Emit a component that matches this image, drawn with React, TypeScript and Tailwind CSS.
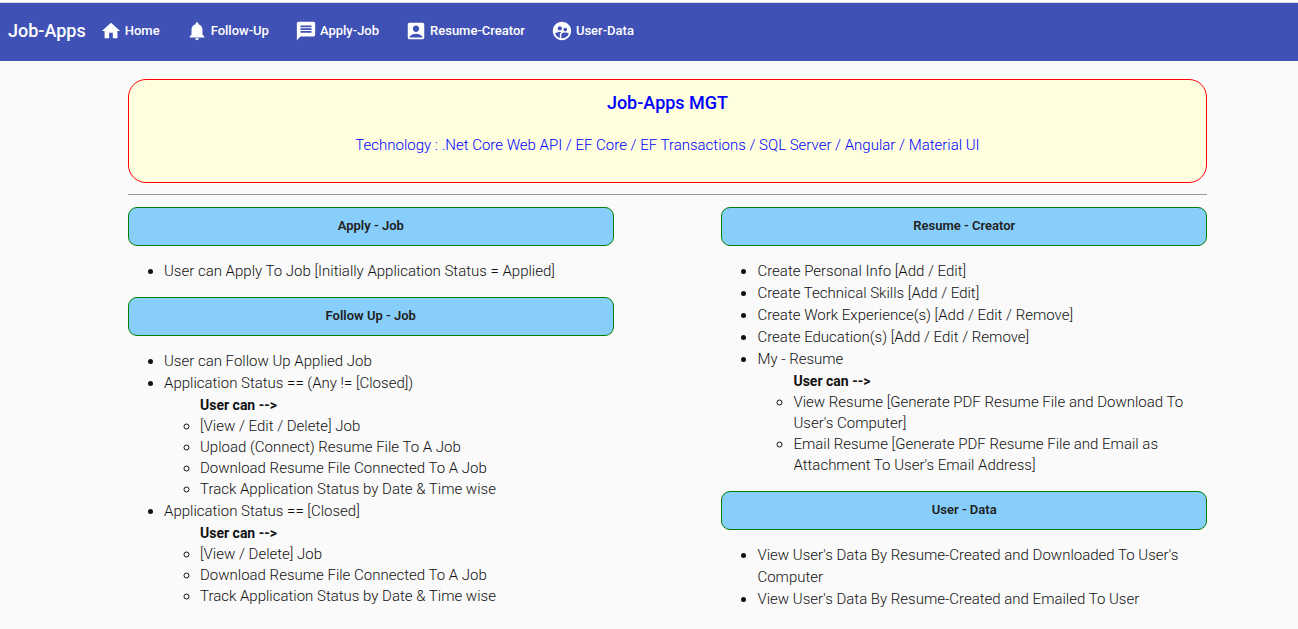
import type { ReactNode } from "react";
import type { IconType } from "react-icons";
import {
  MdAccountBox,
  MdHome,
  MdMessage,
  MdNotifications,
  MdSupervisedUserCircle,
} from "react-icons/md";

const links: { label: string; icon: IconType }[] = [
  { label: "Home", icon: MdHome },
  { label: "Follow-Up", icon: MdNotifications },
  { label: "Apply-Job", icon: MdMessage },
  { label: "Resume-Creator", icon: MdAccountBox },
  { label: "User-Data", icon: MdSupervisedUserCircle },
];

function Section({ title, children }: { title: string; children: ReactNode }) {
  return (
    <section>
      <h2 className="rounded-[9px] border border-[green] bg-[#87cefa] pt-[7px] pb-[9px] text-center text-[13px] leading-[21px] font-semibold">
        {title}
      </h2>
      <ul className="mt-[14px] list-disc pl-9 text-[15px] leading-[22px] font-light text-[#111111]">
        {children}
      </ul>
    </section>
  );
}

function Actions({ items }: { items: string[] }) {
  return (
    <div className="pl-9">
      <b className="block text-sm leading-[22px] font-bold">User can --&gt;</b>
      <ul className="list-[circle] leading-[21px]">
        {items.map((item) => (
          <li key={item}>{item}</li>
        ))}
      </ul>
    </div>
  );
}

export default function App() {
  return (
    <div className="min-h-screen bg-[#fafafa] font-[Roboto,sans-serif] text-[#212121]">
      <div className="h-[3px] border-b border-[#dadce0] bg-white" />
      <header className="flex h-[58px] items-center bg-[#3f51b5] pb-0.5 pl-2 text-white">
        <a href="#" className="text-lg leading-6 font-medium">
          Job-Apps
        </a>
        <nav className="ml-[14px] flex items-center gap-[26px]">
          {links.map(({ label, icon: Icon }) => (
            <a
              key={label}
              href="#"
              className="flex items-center gap-[3px] text-[13px] leading-5 font-medium"
            >
              <Icon size={22} aria-hidden="true" />
              {label}
            </a>
          ))}
        </nav>
      </header>

      <main className="pt-[18px] pr-[91px] pb-5 pl-32">
        <div className="rounded-[18px] border border-[red] bg-[lightyellow] pt-[9px] pb-[26px] text-center text-[blue]">
          <h1 className="text-lg leading-7 font-medium">Job-Apps MGT</h1>
          <p className="mt-[17px] text-[15px] leading-[22px] font-light">
            Technology : .Net Core Web API / EF Core / EF Transactions / SQL Server / Angular /
            Material UI
          </p>
        </div>
        <hr className="mt-[11px] mb-3 border-t border-[#9a9a9a]" />

        <div className="flex items-start justify-between">
          <div className="flex w-[45%] flex-col gap-[15px]">
            <Section title="Apply - Job">
              <li>User can Apply To Job [Initially Application Status = Applied]</li>
            </Section>
            <Section title="Follow Up - Job">
              <li>User can Follow Up Applied Job</li>
              <li>
                Application Status == (Any != [Closed])
                <Actions
                  items={[
                    "[View / Edit / Delete] Job",
                    "Upload (Connect) Resume File To A Job",
                    "Download Resume File Connected To A Job",
                    "Track Application Status by Date & Time wise",
                  ]}
                />
              </li>
              <li>
                Application Status == [Closed]
                <Actions
                  items={[
                    "[View / Delete] Job",
                    "Download Resume File Connected To A Job",
                    "Track Application Status by Date & Time wise",
                  ]}
                />
              </li>
            </Section>
          </div>

          <div className="flex w-[45%] flex-col gap-[15px]">
            <Section title="Resume - Creator">
              <li>Create Personal Info [Add / Edit]</li>
              <li>Create Technical Skills [Add / Edit]</li>
              <li>Create Work Experience(s) [Add / Edit / Remove]</li>
              <li>Create Education(s) [Add / Edit / Remove]</li>
              <li>
                My - Resume
                <Actions
                  items={[
                    "View Resume [Generate PDF Resume File and Download To User's Computer]",
                    "Email Resume [Generate PDF Resume File and Email as Attachment To User's Email Address]",
                  ]}
                />
              </li>
            </Section>
            <Section title="User - Data">
              <li>View User's Data By Resume-Created and Downloaded To User's Computer</li>
              <li>View User's Data By Resume-Created and Emailed To User</li>
            </Section>
          </div>
        </div>
      </main>
    </div>
  );
}
